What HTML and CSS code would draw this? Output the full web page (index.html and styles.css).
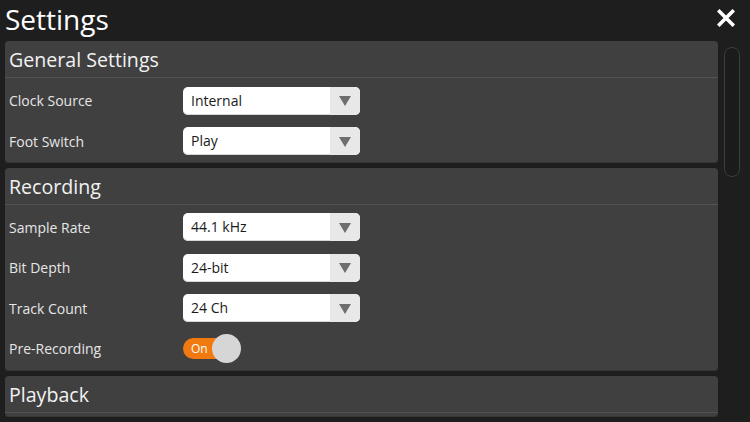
FILE: index.html
```html
<!DOCTYPE html>
<html>
<head>
<meta charset="utf-8">
<link rel="stylesheet" href="styles.css">
</head>
<body>
<div class="app">
  <header class="topbar">
    <h1 class="title">Settings</h1>
    <button class="close" aria-label="Close">
      <svg width="18" height="18" viewBox="0 0 18 18"><path d="M2.5 2.5 L15.5 15.5 M15.5 2.5 L2.5 15.5" stroke="#fff" stroke-width="3.6" stroke-linecap="square"/></svg>
    </button>
  </header>
  <div class="body">
    <main class="list">
      <section class="panel">
        <h2 class="panel-head">General Settings</h2>
        <div class="rows">
          <div class="row"><span class="label">Clock Source</span><div class="select"><span class="val">Internal</span><span class="arrow"></span></div></div>
          <div class="row"><span class="label">Foot Switch</span><div class="select"><span class="val">Play</span><span class="arrow"></span></div></div>
        </div>
      </section>
      <section class="panel">
        <h2 class="panel-head">Recording</h2>
        <div class="rows">
          <div class="row"><span class="label">Sample Rate</span><div class="select"><span class="val">44.1 kHz</span><span class="arrow"></span></div></div>
          <div class="row"><span class="label">Bit Depth</span><div class="select"><span class="val">24-bit</span><span class="arrow"></span></div></div>
          <div class="row"><span class="label">Track Count</span><div class="select"><span class="val">24 Ch</span><span class="arrow"></span></div></div>
          <div class="row"><span class="label">Pre-Recording</span><div class="toggle"><span class="track">On</span><span class="knob"></span></div></div>
        </div>
      </section>
      <section class="panel">
        <h2 class="panel-head">Playback</h2>
        <div class="rows"></div>
      </section>
    </main>
    <div class="scroll"><div class="thumb"></div></div>
  </div>
</div>
</body>
</html>
```
FILE: styles.css
```css
html, body {
  margin: 0;
  padding: 0;
  background: #1e1e1e;
  width: 750px;
  height: 422px;
  overflow: hidden;
  font-family: "Open Sans", "Noto Sans", sans-serif;
}
.app {
  display: flex;
  flex-direction: column;
  height: 422px;
}
.topbar {
  display: flex;
  align-items: center;
  justify-content: space-between;
  height: 41px;
  padding: 0 15px 0 5px;
  box-sizing: border-box;
}
.title {
  margin: 0;
  font-size: 28px;
  font-weight: 400;
  color: #ffffff;
  line-height: 41px;
  margin-top: -2px;
}
.close {
  background: none;
  border: 0;
  padding: 0;
  width: 18px;
  height: 18px;
  margin-top: -5px;
  display: flex;
}
.body {
  display: flex;
  flex: 1;
  min-height: 0;
  padding-left: 5px;
}
.list {
  width: 713px;
  display: flex;
  flex-direction: column;
  gap: 5px;
}
.panel {
  background: #404040;
  border-radius: 4px;
  flex: none;
  box-shadow: inset 0 -1px 0 #363636;
}
.panel-head {
  margin: 0;
  height: 37px;
  box-sizing: border-box;
  border-bottom: 1px solid #525252;
  padding-left: 4px;
  font-size: 19.6px;
  font-weight: 400;
  color: #f2f2f2;
  line-height: 37px;
}
.rows {
  padding: 2px 0 2px;
}
.panel:first-child .rows {
  padding: 2.5px 0 1.5px;
}
.row {
  height: 40.5px;
  display: flex;
  align-items: center;
  padding-left: 4px;
}
.label {
  width: 174px;
  font-size: 14px;
  color: #e6e6e6;
}
.select {
  width: 177px;
  height: 28px;
  background: #ffffff;
  border-radius: 5px;
  display: flex;
  overflow: hidden;
  box-shadow: inset 0 -1px 0 #d6d6d6;
}
.val {
  flex: 1;
  padding-left: 8px;
  font-size: 14px;
  line-height: 28px;
  color: #1a1a1a;
}
.arrow {
  width: 30px;
  background: #e8e8e8;
  display: flex;
  align-items: center;
  justify-content: center;
}
.arrow::after {
  content: "";
  border-left: 6.5px solid transparent;
  border-right: 6.5px solid transparent;
  border-top: 10px solid #6e6e6e;
  margin-top: 1px;
}
.toggle {
  position: relative;
  width: 58px;
  height: 29px;
  display: flex;
  align-items: center;
}
.track {
  width: 48px;
  height: 21px;
  border-radius: 11px;
  background: #f07a10;
  color: #ffffff;
  font-size: 12px;
  line-height: 21px;
  padding-left: 8px;
  box-sizing: border-box;
}
.knob {
  position: absolute;
  left: 29px;
  top: 0;
  width: 29px;
  height: 29px;
  border-radius: 50%;
  background: #d6d6d6;
}
.scroll {
  padding: 6px 0 0 6px;
}
.thumb {
  width: 14px;
  height: 128px;
  border: 1px solid #3c3c3c;
  border-radius: 8px;
  background: #1b1b1b;
}
```
